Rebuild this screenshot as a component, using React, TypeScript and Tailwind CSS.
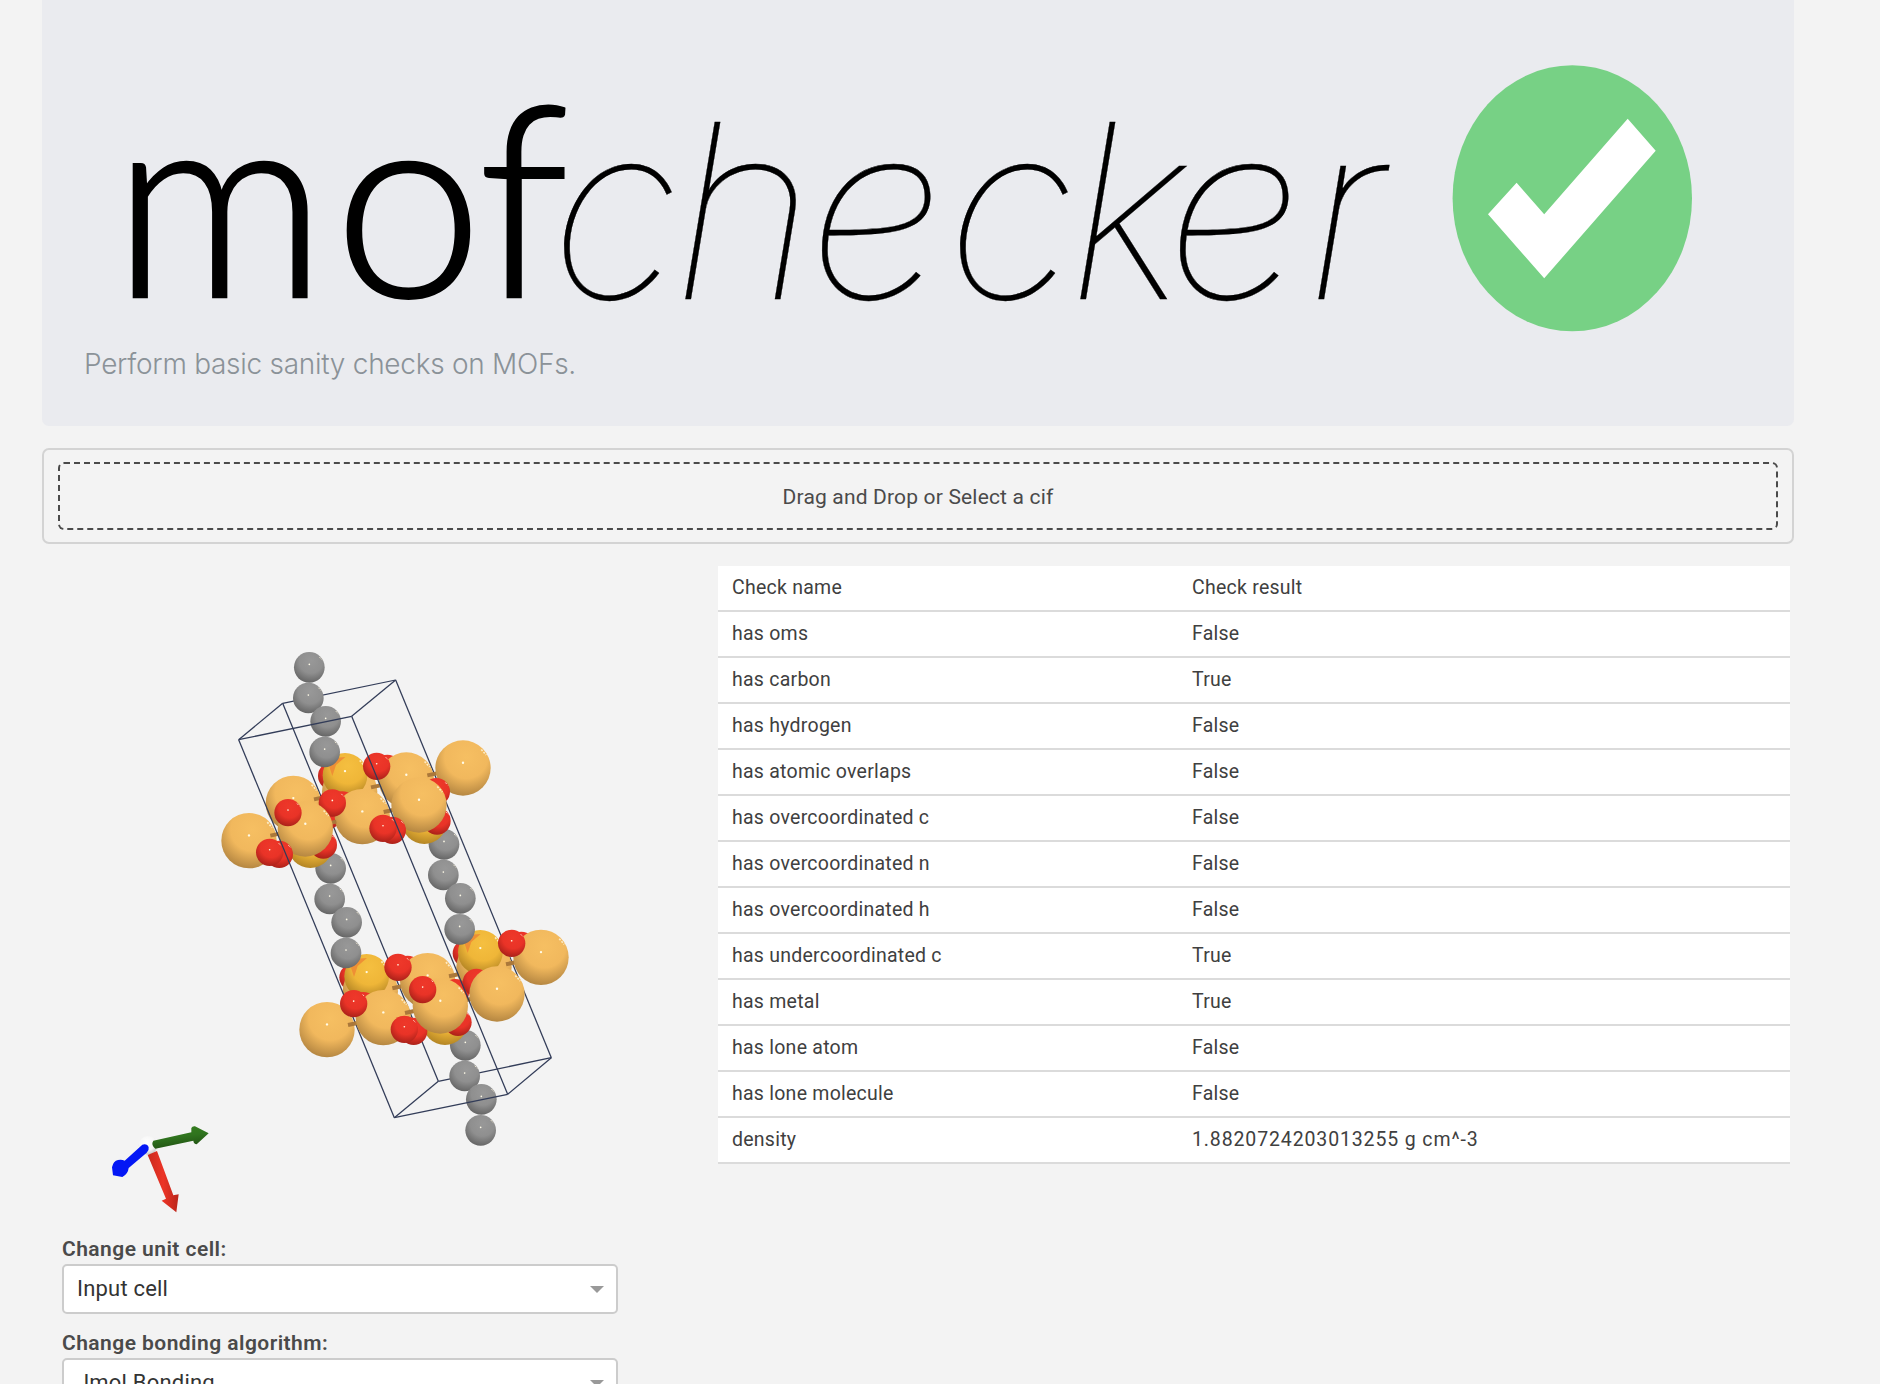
import React from "react";

const checks: [string, string][] = [
  ["Check name", "Check result"],
  ["has oms", "False"],
  ["has carbon", "True"],
  ["has hydrogen", "False"],
  ["has atomic overlaps", "False"],
  ["has overcoordinated c", "False"],
  ["has overcoordinated n", "False"],
  ["has overcoordinated h", "False"],
  ["has undercoordinated c", "True"],
  ["has metal", "True"],
  ["has lone atom", "False"],
  ["has lone molecule", "False"],
  ["density", "1.8820724203013255 g cm^-3"],
];

type Kind = "metal" | "sulfur" | "oxygen" | "carbon";
type Item =
  | [Kind, number, number]
  | ["bond", number, number]
  | ["spike", number, number]
  | ["edge", number, number, number, number];

const radii: Record<Kind, number> = { metal: 83, sulfur: 67, oxygen: 41, carbon: 46 };

// Painted back to front.
const scene: Item[] = [
  ["edge", 248, 220, 715, 1354],
  ["edge", 248, 220, 587, 150],
  ["edge", 715, 1354, 1054, 1283],
  ["edge", 587, 150, 1054, 1283],
  ["edge", 116, 329, 248, 220],
  ["edge", 455, 259, 587, 150],
  ["edge", 583, 1463, 715, 1354],
  ["edge", 923, 1393, 1054, 1283],
  ["carbon", 328, 112],
  ["carbon", 325, 204],
  ["carbon", 377, 274],
  ["carbon", 392, 715],
  ["carbon", 389, 807],
  ["carbon", 440, 877],
  ["carbon", 732, 643],
  ["carbon", 730, 735],
  ["carbon", 781, 805],
  ["carbon", 796, 1246],
  ["carbon", 794, 1338],
  ["carbon", 844, 1408],
  ["carbon", 842, 1501],
  // upper layer
  ["oxygen", 395, 438],
  ["metal", 449, 485],
  ["bond", 513, 472],
  ["sulfur", 435, 436],
  ["spike", 397, 438],
  ["carbon", 374, 366],
  ["oxygen", 562, 415],
  ["metal", 619, 450],
  ["bond", 682, 436],
  ["metal", 789, 414],
  ["oxygen", 709, 485],
  ["sulfur", 673, 575],
  ["oxygen", 711, 573],
  ["oxygen", 530, 409],
  ["metal", 280, 520],
  ["bond", 342, 508],
  ["oxygen", 385, 555],
  ["oxygen", 427, 525],
  ["metal", 487, 560],
  ["bond", 551, 546],
  ["oxygen", 397, 519],
  ["metal", 657, 525],
  ["metal", 147, 632],
  ["sulfur", 331, 647],
  ["oxygen", 370, 645],
  ["bond", 211, 617],
  ["bond", 381, 581],
  ["metal", 316, 597],
  ["oxygen", 264, 548],
  ["oxygen", 238, 673],
  ["oxygen", 209, 667],
  ["oxygen", 577, 601],
  ["oxygen", 549, 595],
  // lower layer
  ["oxygen", 799, 970],
  ["metal", 852, 1012],
  ["sulfur", 841, 967],
  ["spike", 803, 969],
  ["carbon", 779, 898],
  ["oxygen", 964, 946],
  ["bond", 918, 1003],
  ["metal", 1023, 982],
  ["oxygen", 935, 940],
  ["oxygen", 459, 1042],
  ["metal", 511, 1084],
  ["bond", 577, 1075],
  ["sulfur", 500, 1039],
  ["spike", 462, 1041],
  ["carbon", 438, 969],
  ["oxygen", 623, 1018],
  ["metal", 683, 1052],
  ["bond", 747, 1039],
  ["oxygen", 594, 1012],
  ["oxygen", 766, 1088],
  ["oxygen", 829, 1057],
  ["edge", 116, 329, 583, 1463],
  ["metal", 381, 1199],
  ["bond", 444, 1185],
  ["oxygen", 490, 1127],
  ["metal", 550, 1163],
  ["bond", 615, 1149],
  ["oxygen", 461, 1121],
  ["sulfur", 735, 1178],
  ["oxygen", 774, 1177],
  ["oxygen", 641, 1204],
  ["oxygen", 613, 1198],
  ["bond", 785, 1113],
  ["metal", 721, 1128],
  ["oxygen", 668, 1079],
  ["metal", 891, 1092],
  ["edge", 116, 329, 455, 259],
  ["edge", 583, 1463, 923, 1393],
  ["edge", 455, 259, 923, 1393],
];

function SceneItem({ item }: { item: Item }) {
  if (item[0] === "edge") {
    return <line x1={item[1]} y1={item[2]} x2={item[3]} y2={item[4]} stroke="#323c58" strokeWidth="3.8" />;
  }
  if (item[0] === "bond") {
    const [, x, y] = item;
    return <line x1={x} y1={y} x2={x + 28} y2={y - 6} stroke="#ab783a" strokeWidth="12" />;
  }
  if (item[0] === "spike") {
    const [, x, y] = item;
    return <path d={`M${x} ${y} l-9 -28 l10 -26 l38 -3 l-28 24 Z`} fill="#ee8f35" />;
  }
  const [kind, x, y] = item;
  const r = radii[kind];
  return (
    <g>
      <circle cx={x} cy={y} r={r} fill={`url(#${kind})`} />
      <circle cx={x} cy={y - r * 0.19} r={r > 60 ? 3.5 : 2.5} fill="#fffbe8" />
      <path
        d={`M${x + r * 0.66} ${y - r * 0.67} L${x + r * 0.84} ${y - r * 0.47}`}
        stroke="#fff6dc"
        strokeOpacity="0.8"
        strokeWidth={r > 60 ? 5 : 3}
        strokeDasharray="6 4"
      />
    </g>
  );
}

function Shade({ id, light, mid, dark }: { id: string; light: string; mid: string; dark: string }) {
  return (
    <radialGradient id={id} cx="0.56" cy="0.3" r="0.78">
      <stop offset="0" stopColor={light} />
      <stop offset="0.5" stopColor={mid} />
      <stop offset="1" stopColor={dark} />
    </radialGradient>
  );
}

function Structure() {
  return (
    <svg className="block h-[650px] w-[556px]" viewBox="62 566 556 650">
      <defs>
        <Shade id="metal" light="#f6bf62" mid="#f1b85d" dark="#a77b3b" />
        <Shade id="sulfur" light="#f5bf40" mid="#efb638" dark="#a67a20" />
        <Shade id="oxygen" light="#ee382a" mid="#e93327" dark="#9c1d16" />
        <Shade id="carbon" light="#989898" mid="#8f8f8f" dark="#5c5c5c" />
        <linearGradient id="axisRed" x1="0" x2="1">
          <stop offset="0" stopColor="#c92a1e" />
          <stop offset="0.5" stopColor="#ec3426" />
          <stop offset="1" stopColor="#b9261b" />
        </linearGradient>
        <linearGradient id="axisGreen" x1="0" y1="0" x2="0.3" y2="1">
          <stop offset="0" stopColor="#37801f" />
          <stop offset="0.55" stopColor="#2f731e" />
          <stop offset="1" stopColor="#225414" />
        </linearGradient>
        <radialGradient id="axisOrigin" cx="0.45" cy="0.35" r="0.7">
          <stop offset="0" stopColor="#ffffff" />
          <stop offset="0.6" stopColor="#f5f5f5" />
          <stop offset="1" stopColor="#bdbdbd" />
        </radialGradient>
      </defs>
      <g transform="translate(200 630) scale(0.33333)">
        {scene.map((item, i) => (
          <SceneItem key={i} item={item} />
        ))}
      </g>
      <g transform="translate(90 1100) scale(0.33333)">
        <circle cx="174" cy="136" r="28" fill="url(#axisOrigin)" />
        <path d="M173 165 L201 153 L250 286 L266 283 L259 337 L215 302 L228 296 Z" fill="url(#axisRed)" />
        <path
          d="M190 122 L304 97 L304 84 Q307 78 315 79 L356 100 L320 133 Q311 132 310 122 L196 146 Q182 134 190 122 Z"
          fill="url(#axisGreen)"
        />
        <path
          d="M157 134 Q172 130 176 142 Q178 150 170 158 L116 204 Q114 222 97 231 L69 226 L66 202 Q70 182 84 180 Q96 178 104 182 Z"
          fill="#0417f5"
        />
      </g>
    </svg>
  );
}

function Logo() {
  return (
    <svg className="block h-[340px] w-[1668px] overflow-visible" viewBox="84 0 1668 340" role="img" aria-label="mofchecker">
      <g fill="#000" stroke="#000">
        <text x="112 334 478" y="297" fontFamily="Lato" fontSize="267" fontWeight="300" strokeWidth="2.4">
          mof
        </text>
        <text
          x="550 673 808 946 1068 1166 1306"
          y="298.5"
          fontFamily="Inter"
          fontSize="243"
          fontStyle="italic"
          fontWeight="100"
          strokeWidth="0.3"
        >
          checker
        </text>
      </g>
      <ellipse cx="1572.3" cy="198.3" rx="119.7" ry="133" fill="#77d185" />
      <path d="M1488 214.3 L1516.6 182.7 L1544.2 214.3 L1627.7 118.7 L1655.7 150.7 L1544.2 278.3 Z" fill="#fff" />
    </svg>
  );
}

function Select({ label, value }: { label: string; value: string }) {
  return (
    <div className="h-[94px]">
      <div className="h-[28px] text-[21px] leading-[27px] font-semibold tracking-[0.45px] text-[#4a4a4a]">{label}</div>
      <div className="flex h-[50px] items-center justify-between rounded-[5px] border-2 border-[#ccc] bg-white pr-3 pl-[13px]">
        <span className="text-[22px] leading-[46px] tracking-[0.2px] text-[#333]">{value}</span>
        <svg className="h-[7px] w-[14px]" viewBox="0 0 14 7">
          <path d="M0 0 H14 L7 7 Z" fill="#999" />
        </svg>
      </div>
    </div>
  );
}

export default function App() {
  return (
    <div className="h-[1384px] w-full overflow-hidden bg-[#f3f3f3] pl-[42px] font-['Roboto',sans-serif]">
      <div className="w-[1752px]">
        <header className="h-[426px] rounded-b-[7px] bg-[#eaebef] pl-[42px]">
          <Logo />
          <p className="font-['Inter',sans-serif] text-[28px] leading-[48px] font-light tracking-[-0.28px] text-[#8b9298]">
            Perform basic sanity checks on MOFs.
          </p>
        </header>
        <div className="mt-[22px] h-[96px] rounded-[7px] border-2 border-[#d3d3d3] px-[14px] py-3">
          <div className="flex h-[68px] items-center justify-center rounded-[6px] border-2 border-dashed border-[#4a4a4a] pt-[3px] text-[21px] tracking-[0.17px] text-[#4a4a4a]">
            Drag and Drop or Select a cif
          </div>
        </div>
        <main className="mt-[22px] flex">
          <section className="w-[676px] pl-5">
            <div className="w-[556px]">
              <Structure />
              <div className="pt-5">
                <Select label="Change unit cell:" value="Input cell" />
                <Select label="Change bonding algorithm:" value="Jmol Bonding" />
              </div>
            </div>
          </section>
          <section className="w-[1072px] text-[19.5px] tracking-[0.25px] text-[#404040]">
            {checks.map(([name, result]) => (
              <div key={name} className="flex h-[46px] border-b-2 border-[#dbdbdb] bg-white pl-[14px] leading-[44px]">
                <div className="w-[460px]">{name}</div>
                <div className={name === "density" ? "tracking-[0.87px]" : ""}>{result}</div>
              </div>
            ))}
          </section>
        </main>
      </div>
    </div>
  );
}
